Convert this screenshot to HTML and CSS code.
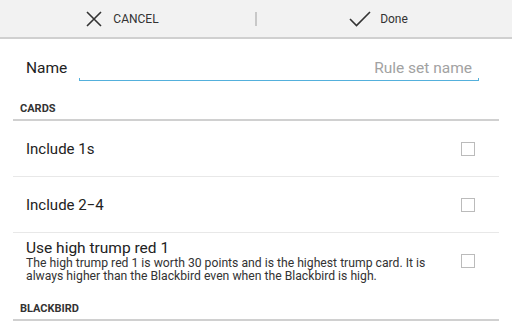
FILE: index.html
```html
<!DOCTYPE html>
<html lang="en">
<head>
<meta charset="UTF-8">
<meta name="viewport" content="width=device-width, initial-scale=1.0">
<title>Rule set</title>
<link rel="stylesheet" href="styles.css">
</head>
<body>

<div class="actionbar">
    <div class="action">
        <svg class="action-icon" width="20" height="20" viewBox="0 0 20 20">
            <path d="M3 3 L17 17 M17 3 L3 17" stroke="#333" stroke-width="1.6" fill="none"/>
        </svg>
        <span class="action-label">CANCEL</span>
    </div>
    <div class="action-divider"></div>
    <div class="action">
        <svg class="action-icon" width="22" height="20" viewBox="0 0 22 20">
            <path d="M1 10 L7.5 16.5 L21 3" stroke="#333" stroke-width="1.6" fill="none"/>
        </svg>
        <span class="action-label">Done</span>
    </div>
</div>

<div id="container">
    <div class="name-row">
        <label class="name-label" for="ruleName">Name</label>
        <div class="field">
            <div class="field-input" id="ruleName">Rule set name</div>
            <div class="field-line"></div>
        </div>
    </div>

    <div class="section">
        <div class="section-title">CARDS</div>
        <div class="row">
            <div class="row-text">
                <div class="row-title">Include 1s</div>
            </div>
            <div class="checkbox"></div>
        </div>
        <div class="row">
            <div class="row-text">
                <div class="row-title">Include 2&minus;4</div>
            </div>
            <div class="checkbox"></div>
        </div>
        <div class="row row-tall">
            <div class="row-text">
                <div class="row-title">Use high trump red 1</div>
                <div class="row-desc">The high trump red 1 is worth 30 points and is the highest trump card. It is always higher than the Blackbird even when the Blackbird is high.</div>
            </div>
            <div class="checkbox"></div>
        </div>
    </div>

    <div class="section">
        <div class="section-title section-title-next">BLACKBIRD</div>
    </div>
</div>

</body>
</html>
```

FILE: styles.css
```css
body {
    font-family: Roboto, "Noto Sans", sans-serif;
    margin: 0;
    background-color: #fff;
    color: #222;
}
.actionbar {
    display: flex;
    align-items: center;
    height: 37px;
    background-color: #f2f2f2;
    border-bottom: 2px solid #d0d0d0;
}
.action {
    flex: 1;
    display: flex;
    align-items: center;
    justify-content: center;
    padding-right: 12px;
    gap: 9px;
}
.action-label {
    font-size: 12px;
    color: #333;
}
.action-divider {
    width: 2px;
    height: 14px;
    background-color: #c8c8c8;
}
.name-row {
    display: flex;
    align-items: flex-end;
    padding: 19px 33px 0 26px;
}
.name-label {
    width: 53px;
    font-size: 15.5px;
    line-height: 20px;
    padding-bottom: 3px;
}
.field {
    flex: 1;
}
.field-input {
    text-align: right;
    font-size: 15.5px;
    line-height: 20px;
    color: #a2a2a2;
    padding-right: 7px;
}
.field-line {
    height: 2px;
    border: 1px solid #54b0dc;
    border-top: none;
}
.section {
    margin: 0 13px;
}
.section-title {
    font-size: 11px;
    font-weight: bold;
    color: #333;
    padding: 21px 0 4px 7px;
    border-bottom: 2px solid #d0d0d0;
}
.section-title-next {
    padding-top: 19px;
}
.row {
    display: flex;
    align-items: center;
    min-height: 55px;
    padding: 0 24px 0 13px;
    border-bottom: 1px solid #e8e8e8;
}
.row-tall {
    border-bottom: none;
    padding-top: 6px;
    padding-bottom: 0;
    min-height: 0;
}
.row-text {
    flex: 1;
}
.row-title {
    font-size: 15px;
}
.row-tall .row-title {
    font-size: 15.5px;
}
.row-desc {
    font-size: 12.2px;
    line-height: 13px;
    color: #333;
    padding-right: 30px;
}
.checkbox {
    width: 12px;
    height: 12px;
    border: 1px solid #bbb;
}
```
